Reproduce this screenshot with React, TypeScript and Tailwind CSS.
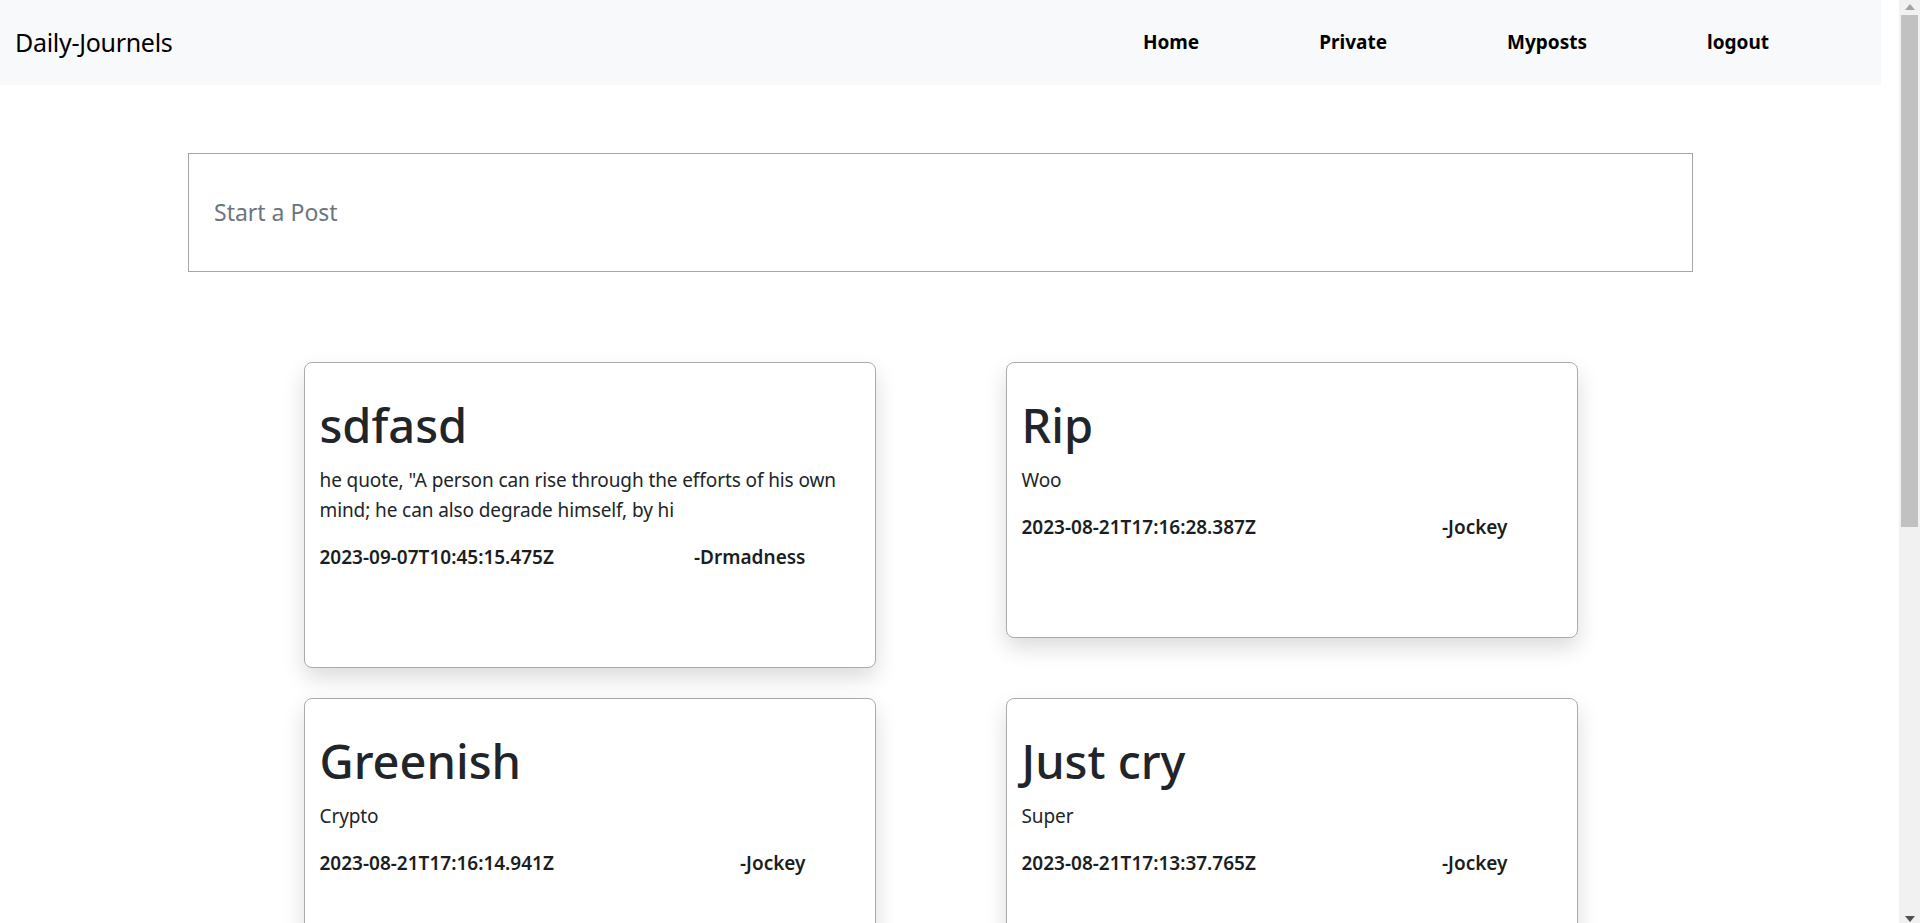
import React from "react";

type Post = { title: string; body: string; date: string; author: string };

const posts: Post[] = [
  {
    title: "sdfasd",
    body: 'he quote, "A person can rise through the efforts of his own mind; he can also degrade himself, by hi',
    date: "2023-09-07T10:45:15.475Z",
    author: "-Drmadness",
  },
  { title: "Rip", body: "Woo", date: "2023-08-21T17:16:28.387Z", author: "-Jockey" },
  { title: "Greenish", body: "Crypto", date: "2023-08-21T17:16:14.941Z", author: "-Jockey" },
  { title: "Just cry", body: "Super", date: "2023-08-21T17:13:37.765Z", author: "-Jockey" },
];

function Card({ p }: { p: Post }) {
  return (
    <div className="self-start border border-[#ababab] rounded-[8px] bg-white shadow-[0_10px_22px_rgba(0,0,0,0.14)] px-[15px] pt-[32px] pb-[95px]">
      <h1 className="text-[47px] leading-[60px] font-medium text-[#212529] mb-[10px]">{p.title}</h1>
      <p className="text-[19px] leading-[30px] tracking-[-0.1px] text-[#212529]">{p.body}</p>
      <div className="mt-[17px] flex justify-between pr-[54px] text-[19px] leading-[30px] font-semibold text-[#1b1e21]">
        <span>{p.date}</span>
        <span>{p.author}</span>
      </div>
    </div>
  );
}

export default function App() {
  return (
    <div className="flex h-[923px] w-[1920px] overflow-hidden bg-white font-['Noto_Sans',sans-serif]">
      <div className="w-[1899px] flex flex-col">
        <div className="w-[1881px] flex flex-col">
          <nav className="h-[85px] bg-[#f8f9fa] flex items-center">
            <span className="pl-[15px] text-[25px] text-black tracking-[-0.3px]">Daily-Journels</span>
            <div className="ml-auto flex items-center gap-[120px] pr-[112px] text-[19px] font-bold text-black">
              <span>Home</span>
              <span>Private</span>
              <span>Myposts</span>
              <span>logout</span>
            </div>
          </nav>
          <div className="mt-[68px] mx-auto w-[1505px] h-[119px] border border-[#a6a6a6] flex items-center pl-[25px] pb-[1px] text-[23px] text-[#6c757d]">
            Start a Post
          </div>
          <div className="mt-[90px] mx-auto w-[1274px] grid grid-cols-2 gap-x-[130px] gap-y-[30px]">
            {posts.map((p) => (
              <Card key={p.title} p={p} />
            ))}
          </div>
        </div>
      </div>
      <div className="w-[21px] h-full bg-[#f1f1f1] flex flex-col items-center">
        <svg width="10" height="6" viewBox="0 0 10 6" className="mt-[4px]">
          <polygon points="5,0 10,6 0,6" fill="#a3a3a3" />
        </svg>
        <div className="mt-[5px] w-[17px] h-[512px] bg-[#c1c1c1]" />
        <div className="flex-1" />
        <svg width="10" height="6" viewBox="0 0 10 6" className="mb-[1px]">
          <polygon points="0,0 10,0 5,6" fill="#505050" />
        </svg>
      </div>
    </div>
  );
}
